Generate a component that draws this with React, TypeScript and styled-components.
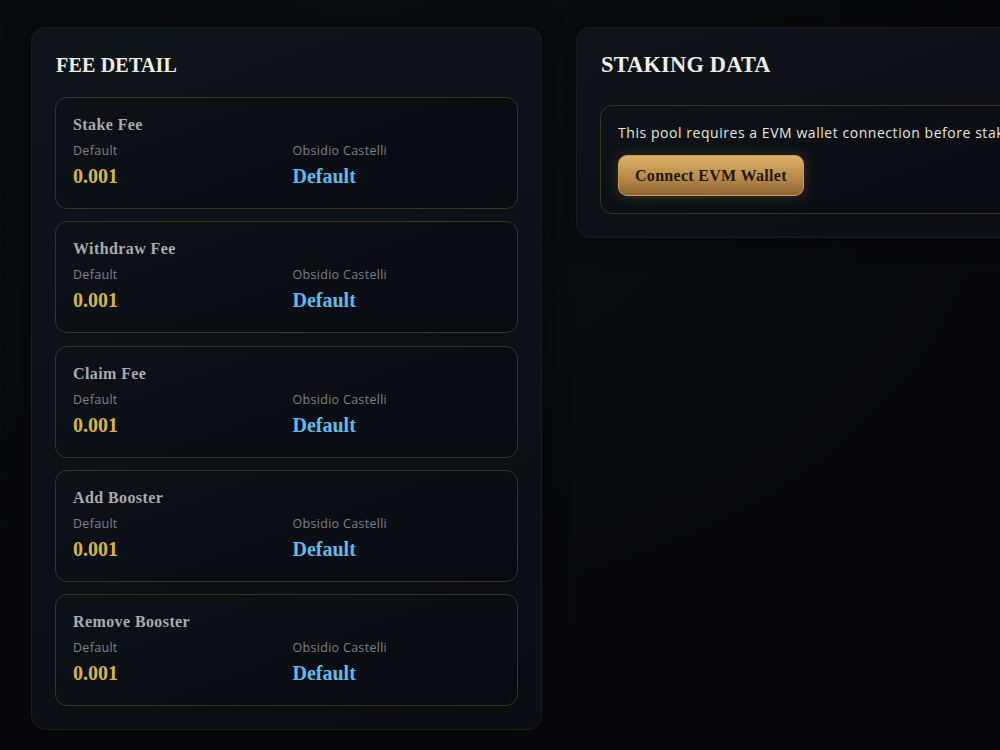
import styled, { createGlobalStyle } from "styled-components";

const GlobalStyle = createGlobalStyle`
  html, body {
    margin: 0;
    padding: 0;
    background: #05070a;
    overflow: hidden;
  }
  body {
    font-family: "Open Sans", "Liberation Sans", sans-serif;
    color: #e8e6e1;
  }
`;

interface FeeRow {
  label: string;
  value: string;
  custom: string;
}

const fees: Array<FeeRow> = [
  { label: "Stake Fee", value: "0.001", custom: "Default" },
  { label: "Withdraw Fee", value: "0.001", custom: "Default" },
  { label: "Claim Fee", value: "0.001", custom: "Default" },
  { label: "Add Booster", value: "0.001", custom: "Default" },
  { label: "Remove Booster", value: "0.001", custom: "Default" },
];

const Page = styled.div`
  display: flex;
  align-items: flex-start;
  gap: 34px;
  padding: 27px 0 0 31px;
  width: 1200px;
  min-height: 750px;
  box-sizing: border-box;
  background: radial-gradient(ellipse at 30% 20%, #0b0f14 0%, #05070a 60%);
`;

const Panel = styled.section<{ $width: number }>`
  width: ${(p) => p.$width}px;
  box-sizing: border-box;
  padding: 22px 23px 23px;
  border: 1px solid #161d27;
  border-radius: 14px;
  background: linear-gradient(160deg, #0f151d 0%, #0a0e14 100%);
  box-shadow: 0 0 24px rgba(0, 0, 0, 0.6);
`;

const Heading = styled.h2<{ $size: number; $gap: number }>`
  margin: 0 0 ${(p) => p.$gap}px 1px;
  font-family: "Liberation Serif", serif;
  font-weight: 700;
  font-size: ${(p) => p.$size}px;
  line-height: 30px;
  color: #f1ede4;
  letter-spacing: 0.2px;
`;

const List = styled.div`
  display: flex;
  flex-direction: column;
  gap: 12.25px;
`;

const Card = styled.div`
  box-sizing: border-box;
  height: 112px;
  padding: 17px 17px 0;
  border: 1px solid #3b3422;
  border-radius: 12px;
  background: linear-gradient(160deg, #0d121a 0%, #080b10 100%);
`;

const CardTitle = styled.div`
  font-family: "Liberation Serif", serif;
  font-weight: 700;
  font-size: 16px;
  line-height: 20px;
  letter-spacing: 0.4px;
  color: #a8aab0;
  margin-bottom: 7px;
`;

const Cols = styled.div`
  display: grid;
  grid-template-columns: 1fr 1fr;
  column-gap: 12px;
`;

const Label = styled.div`
  font-size: 12.5px;
  line-height: 18px;
  letter-spacing: 0.3px;
  color: #7c8088;
`;

const Value = styled.div<{ $tone: "gold" | "blue" }>`
  margin-top: 4px;
  font-family: "Liberation Serif", serif;
  font-weight: 700;
  font-size: 20px;
  line-height: 24px;
  color: ${(p) => (p.$tone === "gold" ? "#d6b446" : "#5fbbe8")};
`;

const Notice = styled.div`
  display: flex;
  flex-direction: column;
  align-items: flex-start;
  gap: 11px;
  padding: 16px 17px 17px;
  border: 1px solid #3b3422;
  border-radius: 12px;
  background: linear-gradient(160deg, #0e131a 0%, #090c11 100%);
`;

const NoticeText = styled.p`
  margin: 0;
  font-size: 14px;
  line-height: 22px;
  letter-spacing: 0.55px;
  color: #e6e4df;
  white-space: nowrap;
`;

const GoldButton = styled.button`
  height: 41px;
  padding: 0 16px;
  border: 1px solid #c99a50;
  border-radius: 9px;
  background: linear-gradient(180deg, #dcb16a 0%, #b98a4a 55%, #8c6533 100%);
  box-shadow: 0 0 14px rgba(200, 150, 70, 0.25);
  font-family: "Liberation Serif", serif;
  font-weight: 700;
  font-size: 16px;
  letter-spacing: 0.3px;
  color: #24190c;
  cursor: pointer;
`;

export default function App() {
  return (
    <>
      <GlobalStyle />
      <Page>
        <Panel $width={511}>
          <Heading $size={20} $gap={17}>FEE DETAIL</Heading>
          <List>
            {fees.map((fee) => (
              <Card key={fee.label}>
                <CardTitle>{fee.label}</CardTitle>
                <Cols>
                  <div>
                    <Label>Default</Label>
                    <Value $tone="gold">{fee.value}</Value>
                  </div>
                  <div>
                    <Label>Obsidio Castelli</Label>
                    <Value $tone="blue">{fee.custom}</Value>
                  </div>
                </Cols>
              </Card>
            ))}
          </List>
        </Panel>
        <Panel $width={511}>
          <Heading $size={22.4} $gap={25}>STAKING DATA</Heading>
          <Notice>
            <NoticeText>
              This pool requires a EVM wallet connection before staking.
            </NoticeText>
            <GoldButton type="button">Connect EVM Wallet</GoldButton>
          </Notice>
        </Panel>
      </Page>
    </>
  );
}
